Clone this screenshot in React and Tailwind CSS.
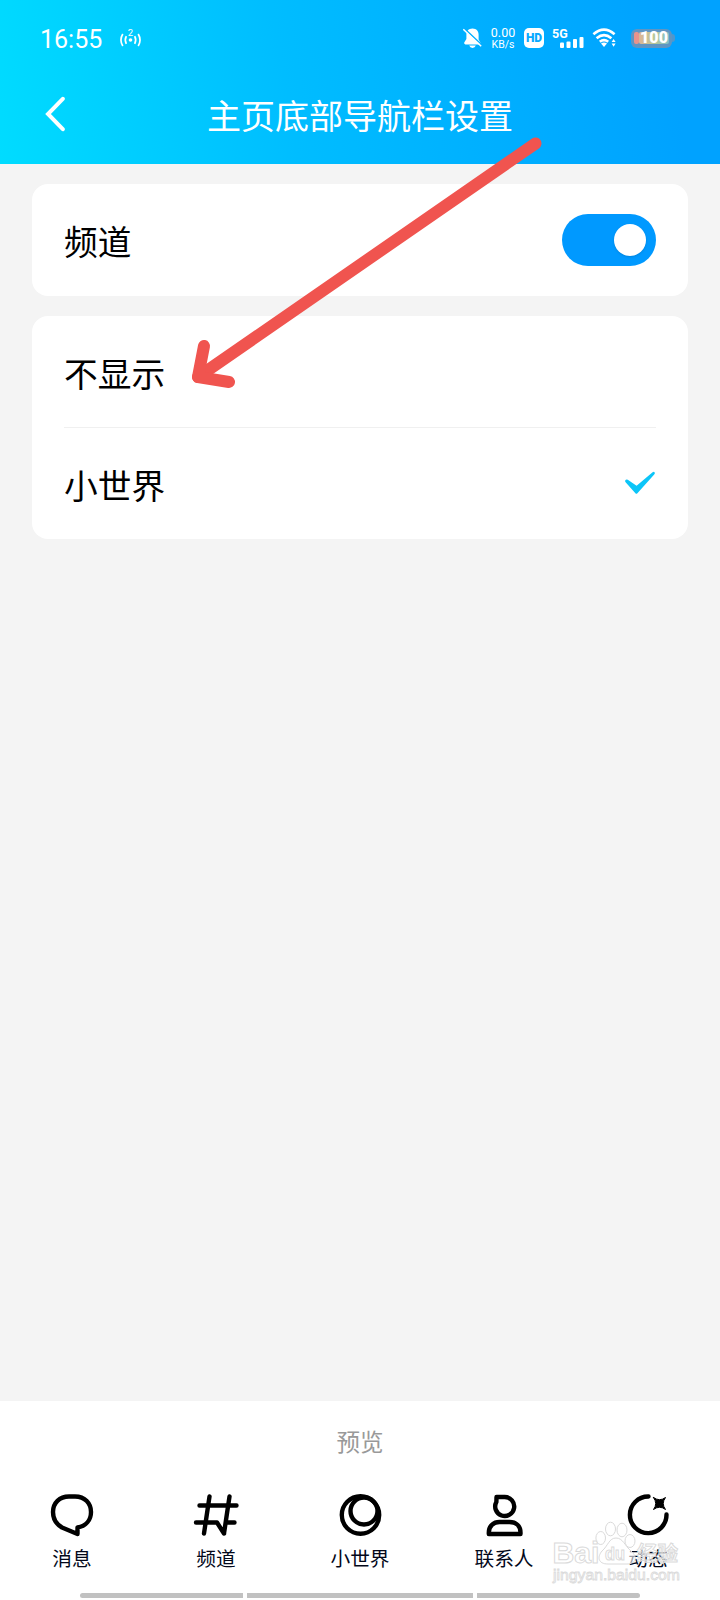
import React from "react";

const StatusBar = () => (
	<div className="h-[76px] flex items-center justify-between pl-10 pr-[45px]">
		<div className="flex items-center gap-4">
			<span className="pt-0.5 font-['Roboto',sans-serif] text-[25px] leading-none">
				16:55
			</span>
			<svg width="24" height="22" viewBox="0 0 24 22" fill="none" stroke="currentColor">
				<circle cx="12.5" cy="13" r="1.8" fill="currentColor" stroke="none" />
				<path d="M8.3 9.2Q6.3 13 8.3 16.8M16.7 9.2Q18.7 13 16.7 16.8" strokeWidth="1.7" />
				<path d="M4.8 7Q1.1 13 4.8 19M20.2 7Q23.9 13 20.2 19" strokeWidth="1.7" />
				<text x="12.5" y="8.5" textAnchor="middle" fontSize="9.5" fill="currentColor" stroke="none" fontFamily="Roboto, sans-serif">
					2
				</text>
			</svg>
		</div>
		<div className="flex items-center">
			<svg width="19" height="20" viewBox="0 0 19 20" fill="currentColor">
				<path d="M9.5 0.5C5.5 0.5 3.4 3.3 3.4 6.8V11L1.2 14.6Q0.8 16.4 2.4 16.4H16.6Q18 16.4 17.4 14.6L15.6 11.5V6.8C15.6 3.3 13.5 0.5 9.5 0.5ZM6.2 17.6H12.8Q12 20 9.5 20T6.2 17.6Z" />
				<path d="M1.6 0.8L19 17" stroke="#03aeff" strokeWidth="1.6" />
				<path d="M0.3 1.2L18.2 18.2" stroke="currentColor" strokeWidth="1.5" />
			</svg>
			<div className="ml-2 w-[26px] flex flex-col items-center font-['Roboto',sans-serif]">
				<span className="text-[12.5px] leading-3">0.00</span>
				<span className="text-[10.5px] leading-[11px]">KB/s</span>
			</div>
			<div className="ml-2 size-5 rounded-[5px] bg-white text-[#08a9ff] flex items-center justify-center font-['Roboto',sans-serif] font-black text-[12px]">
				HD
			</div>
			<svg className="ml-2" width="32" height="26" viewBox="0 -2 32 26" fill="currentColor">
				<text x="0" y="10.5" fontSize="12.5" fontWeight="700" fontFamily="Roboto, sans-serif">
					5G
				</text>
				<rect x="8" y="15.5" width="4" height="5.5" rx="1" />
				<rect x="14.5" y="14.5" width="4" height="6.5" rx="1" />
				<rect x="21" y="12" width="4" height="9" rx="1" />
				<rect x="27.5" y="10" width="4" height="11" rx="1" />
			</svg>
			<svg className="ml-2" width="25" height="20" viewBox="0 0 25 20" fill="none" stroke="currentColor" strokeWidth="2.6">
				<path d="M1.4 6.2Q12 -3 22.6 6.2" />
				<path d="M4.6 10.2Q12 4 19.4 10.2" />
				<path d="M7.8 13.8Q12 10.4 16.2 13.8" />
				<path d="M9 15.6L12 19L15 15.6Q12 13.4 9 15.6Z" fill="currentColor" stroke="none" />
				<path d="M19.6 14L21.6 11L23.6 14ZM19.6 15.6L21.6 18.8L23.6 15.6Z" fill="currentColor" stroke="none" />
			</svg>
			<div className="ml-3.5 flex items-center">
				<div className="w-[41px] h-[19px] rounded-md p-[3px] bg-[#6f93b8]/85 flex items-center">
					<div className="w-[5px] h-3 rounded-xs bg-[#e8938c]" />
					<div className="flex-1 h-3 rounded-xs bg-linear-to-r from-[#dcb596] via-[#b9c795] to-[#7dbfc9] flex items-center justify-center font-['Roboto',sans-serif] font-black text-[16px] leading-none">
						100
					</div>
				</div>
				<div className="w-[3px] h-2 rounded-r-full bg-[#6f93b8]/70" />
			</div>
		</div>
	</div>
);

const Header = () => (
	<header className="h-[164px] text-white bg-linear-[80deg] from-[#00dcff] via-[#00bdff] via-40% to-[#00a2ff] to-92%">
		<StatusBar />
		<div className="h-[78px] grid grid-cols-[1fr_auto_1fr] items-center">
			<svg className="ml-[45px] mb-0.5" width="22" height="36" viewBox="0 0 22 36" fill="none" stroke="currentColor" strokeWidth="4" strokeLinecap="round">
				<path d="M17.8 2.8L3 18L17.8 33.2" />
			</svg>
			<h1 className="text-[34px] leading-none">主页底部导航栏设置</h1>
		</div>
	</header>
);

const Row = ({ label, children }) => (
	<div className="h-28 flex items-center justify-between">
		<span className="pt-0.5 text-[33.7px] leading-none">{label}</span>
		{children}
	</div>
);

const Toggle = () => (
	<div className="w-[94px] h-[52px] rounded-full bg-[#0099ff] flex items-center justify-end pr-2.5">
		<div className="size-8 rounded-full bg-white shadow" />
	</div>
);

const TABS = [
	{
		label: "消息",
		icon: (
			<path d="M20 4.5H26C36 4.5 42 11.5 42 20C42 28 37 34 28.5 35.5V42L13 35.5C7 32 4 27 4 20C4 11 10.5 4.5 20 4.5Z" />
		),
	},
	{
		label: "频道",
		icon: <path d="M16.5 4.5L11 41.5M36.5 4.5L31 41.5M6.5 13.5H43.5M3 30.5H24L31 41.5M33.5 30.5H41.5" />,
	},
	{
		label: "小世界",
		icon: (
			<>
				<circle cx="23.5" cy="23" r="18.7" />
				<circle cx="27" cy="19" r="13.5" />
			</>
		),
	},
	{
		label: "联系人",
		icon: (
			<>
				<path d="M15.5 5H23.7A9.5 9.5 0 1 1 15.4 9.9Z" />
				<path d="M7.8 42V40.5C7.8 34 12.5 30 18.5 30H28.5C35 30 39.5 34 39.5 40.5V42Z" />
			</>
		),
	},
	{
		label: "动态",
		icon: (
			<>
				<path d="M23.5 4.5A18.3 18.3 0 1 0 41.5 22.5" />
				<path
					d="M28.5 5.5Q34.5 10 40.5 5.5Q36 11.5 40.5 17.5Q34.5 13 28.5 17.5Q33 11.5 28.5 5.5Z"
					fill="currentColor"
					strokeWidth="1"
				/>
			</>
		),
	},
];

const Watermark = () => (
	<svg
		className="absolute left-[548px] top-[1516px]"
		width="140"
		height="70"
		viewBox="0 0 140 70"
		fill="#ffffff"
		fillOpacity="0.6"
		stroke="#dadada"
		strokeWidth="1"
		fontFamily="'Liberation Sans', 'Noto Sans CJK SC', sans-serif"
		fontWeight="700">
		<text x="4.5" y="46.5" fontSize="30" textLength="47" lengthAdjust="spacingAndGlyphs">
			Bai
		</text>
		<path d="M68 22C75 22 77 30 83 35C90 41 88 48 79 48H60C50 48 49 41 54 35C60 30 61 22 68 22Z" />
		<ellipse cx="52.7" cy="22" rx="4.8" ry="6.5" />
		<ellipse cx="62.5" cy="13" rx="5" ry="6.8" />
		<ellipse cx="74" cy="14" rx="5" ry="6.8" />
		<ellipse cx="82" cy="25" rx="5" ry="6.5" />
		<text x="57" y="43.5" fontSize="18" textLength="20" lengthAdjust="spacingAndGlyphs">
			du
		</text>
		<text x="89" y="45" fontSize="20.5">
			经验
		</text>
		<text x="5" y="64" fontSize="15" strokeWidth="0.8" fontWeight="400" textLength="127" lengthAdjust="spacingAndGlyphs">
			jingyan.baidu.com
		</text>
	</svg>
);

const Arrow = () => (
	<svg
		className="absolute left-0 top-0 pointer-events-none"
		width="720"
		height="400"
		viewBox="0 0 720 400"
		fill="none"
		stroke="#f0544f"
		strokeWidth="12"
		strokeLinecap="round"
		strokeLinejoin="round">
		<path d="M535.5 143.5L198 377" />
		<path d="M204 346L198 377L229 382" />
	</svg>
);

export default function App() {
	return (
		<div className="relative w-[720px] h-[1600px] overflow-hidden flex flex-col bg-[#f4f4f4] text-black font-['Noto_Sans_CJK_SC',sans-serif]">
			<Header />
			<main className="flex-1 px-8 pt-5 flex flex-col gap-5">
				<section className="bg-white rounded-2xl px-8">
					<Row label="频道">
						<Toggle />
					</Row>
				</section>
				<section className="bg-white rounded-2xl px-8 h-[223px]">
					<Row label="不显示" />
					<div className="-mt-px h-px bg-[#f0f0f0]" />
					<Row label="小世界">
						<svg className="mb-0.5" width="32" height="24" viewBox="0 0 32 24" fill="#0cc5f8">
							<path d="M1.2 9.4Q2.2 7.8 3.8 8.8L12.6 14.8L28.6 1.2Q30 0.4 30.7 1.4Q31.2 2.4 30.2 3.4L13.4 22.2Q12.4 23.2 11.4 22.2L1.6 11.2Q0.8 10.2 1.2 9.4Z" />
						</svg>
					</Row>
				</section>
			</main>
			<footer className="h-[199px] bg-white flex flex-col items-center">
				<p className="mt-[27px] text-[23.5px] leading-[26px] text-[#999999]">预览</p>
				<nav className="mt-[38px] w-full grid grid-cols-5">
					{TABS.map((tab) => (
						<div key={tab.label} className="flex flex-col items-center gap-2">
							<svg
								width="46"
								height="46"
								viewBox="0 0 46 46"
								fill="none"
								stroke="currentColor"
								strokeWidth="4.4"
								strokeLinecap="round"
								strokeLinejoin="round">
								{tab.icon}
							</svg>
							<span className="text-[19.7px] leading-6 text-[#03081a]">{tab.label}</span>
						</div>
					))}
				</nav>
				<div className="mt-auto mb-0.5 flex gap-1">
					<div className="w-[163px] h-[5px] rounded-l-full bg-[#c1c1c1]" />
					<div className="w-[226px] h-[5px] bg-[#c1c1c1]" />
					<div className="w-[163px] h-[5px] rounded-r-full bg-[#c1c1c1]" />
				</div>
			</footer>
			<Watermark />
			<Arrow />
		</div>
	);
}
